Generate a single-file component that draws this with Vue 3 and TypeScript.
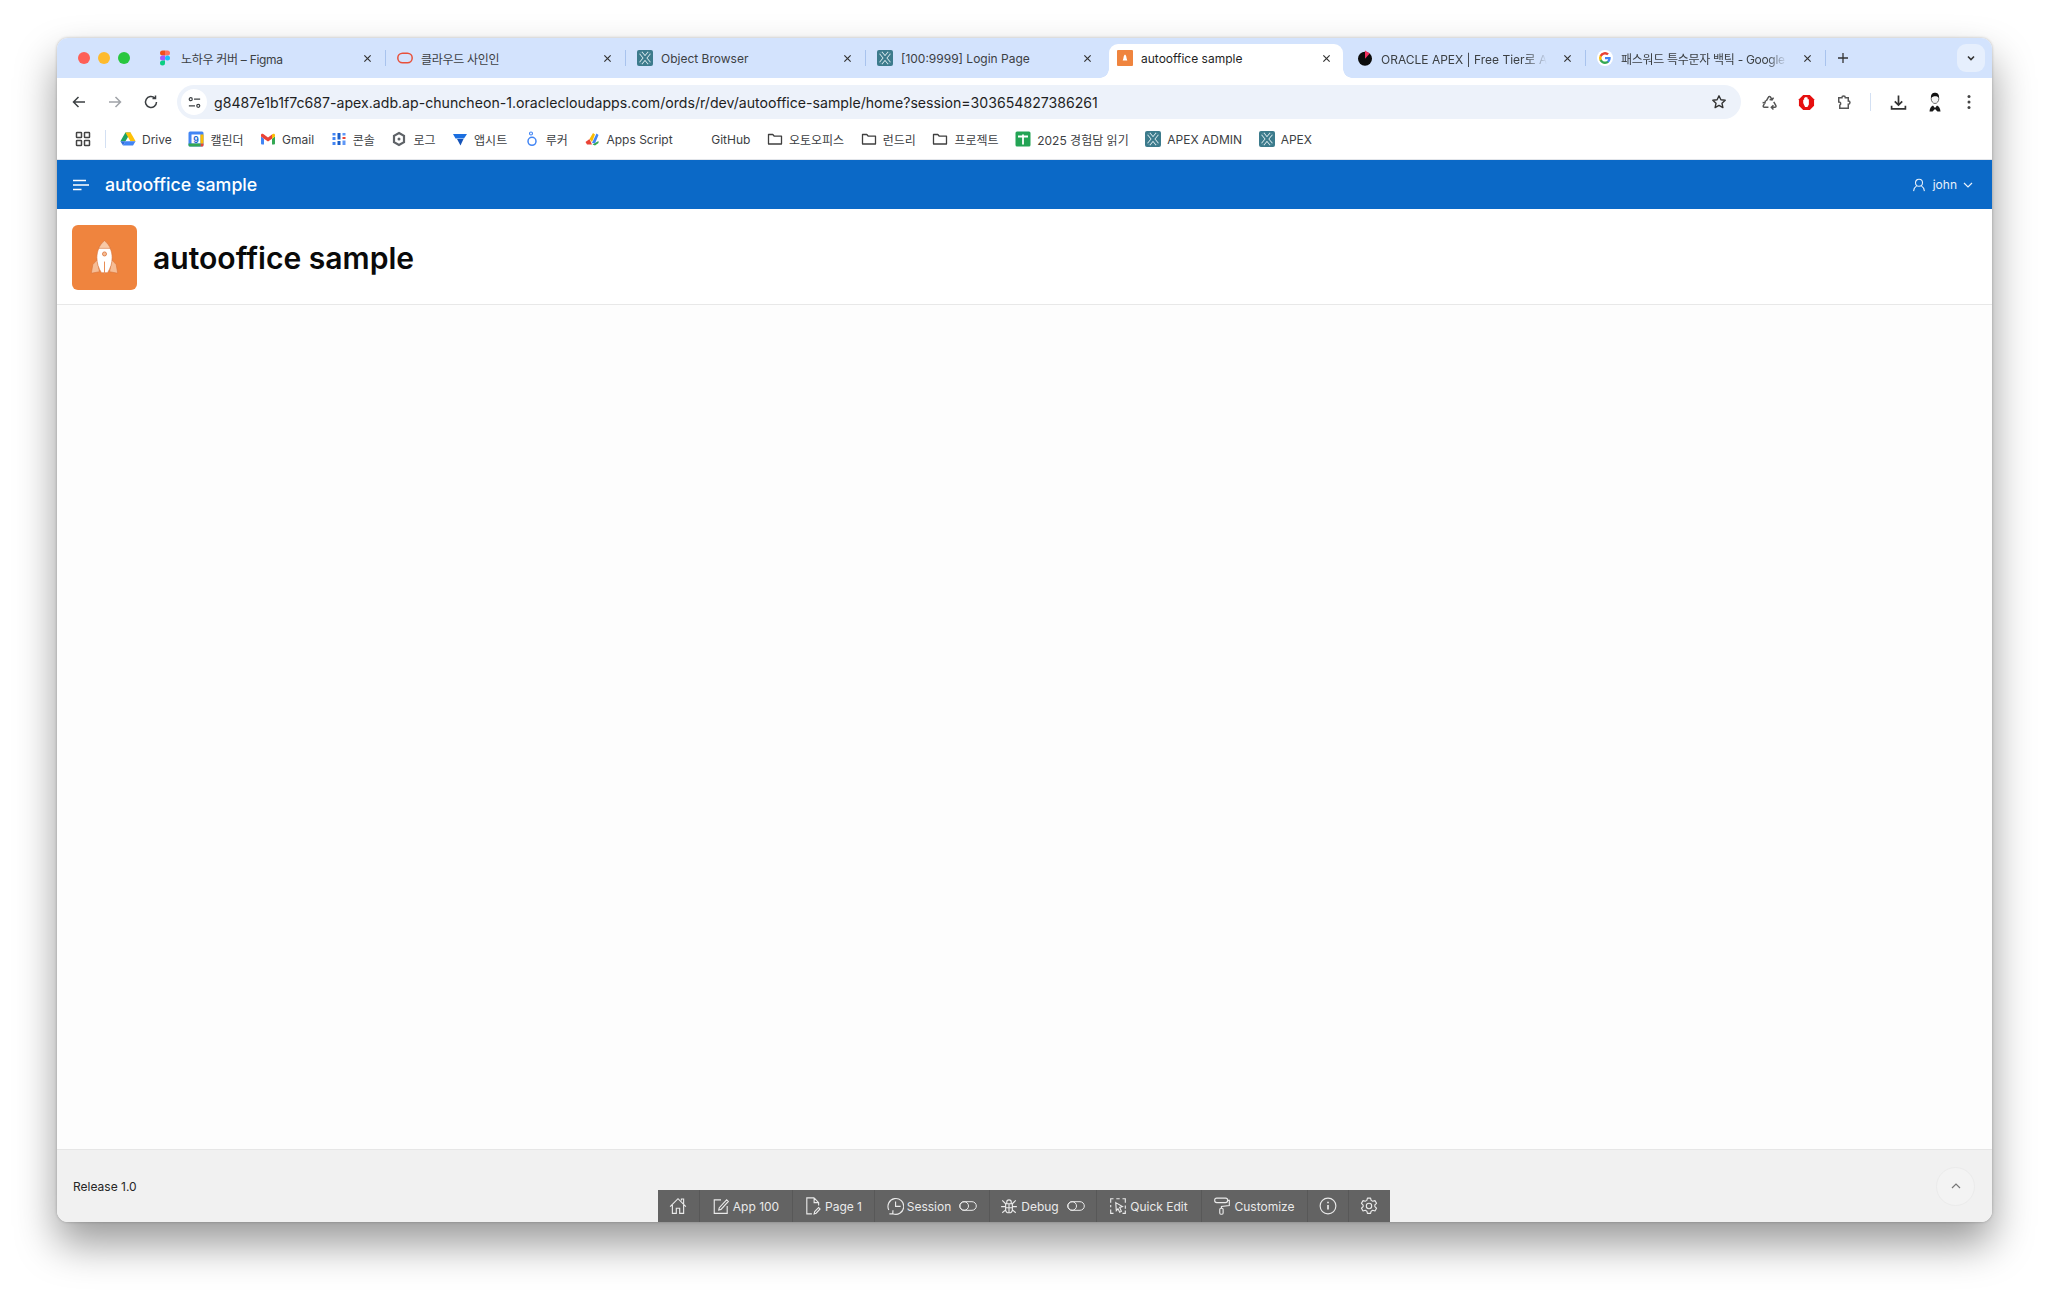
<template>
  <div class="desktop">
    <div class="window">
      <div class="tabstrip">
        <div class="traffic">
          <span class="dot red"></span>
          <span class="dot yellow"></span>
          <span class="dot green"></span>
        </div>
        <div
          v-for="t in tabs"
          :key="t.title"
          class="tab"
          :class="{ active: t.active, nosep: t.nosep }"
        >
          <svg class="fav" viewBox="0 0 16 16" v-html="icons[t.icon]"></svg>
          <span class="tab-title" :class="{ fade: t.fade, tight: t.tight }">{{ t.title }}</span>
          <svg class="tab-x" viewBox="0 0 10 10"><path d="M1.500 1.500l7 7M8.500 1.500l-7 7" /></svg>
        </div>
        <svg class="plus" viewBox="0 0 12 12"><path d="M6 1v10M1 6h10" /></svg>
        <div class="tab-menu">
          <svg viewBox="0 0 10 10"><path d="M2 3.500L5 6.500 8 3.500" /></svg>
        </div>
      </div>

      <div class="toolbar">
        <svg class="tool" viewBox="0 0 16 16"><path d="M14 8H2.500M7.500 3L2.500 8l5 5" /></svg>
        <svg class="tool dim" viewBox="0 0 16 16"><path d="M2 8h11.500M8.500 3l5 5-5 5" /></svg>
        <svg class="tool" viewBox="0 0 16 16"><path d="M13.500 8a5.500 5.500 0 1 1-1.700-4M12.500 1.500V4.500H9.500" /></svg>
        <div class="omnibox">
          <span class="tune">
            <svg viewBox="0 0 16 16"><circle cx="4" cy="4.500" r="1.600" /><circle cx="12" cy="11.500" r="1.600" /><path d="M7.500 4.500H14M2 11.500H8.500" /></svg>
          </span>
          <span class="url">g8487e1b1f7c687-apex.adb.ap-chuncheon-1.oraclecloudapps.com/ords/r/dev/autooffice-sample/home?session=303654827386261</span>
          <svg class="star" viewBox="0 0 16 16"><path d="M8 1.800l1.900 4 4.300.5-3.200 3 .9 4.300L8 11.400l-3.900 2.200.9-4.300-3.200-3 4.300-.5z" /></svg>
        </div>
        <div class="extensions">
          <svg class="ext" viewBox="0 0 16 16"><path d="M5 6.500L7 3c.4-.8 1.500-.8 2 0l1.200 2M11.800 3.400l-1.400 2.200-2.300-.5M12 7.500l2 3.500c.4.8-.1 1.500-1 1.500h-2.500M11.700 14.600l-2-2.100 2-2M7 12.500H3.200c-.9 0-1.400-.7-1-1.500l1.300-2.500M1.500 8l2.100.5.700-2.300" /></svg>
          <svg class="ext stop" viewBox="0 0 18 18"><path class="stop-bg" d="M5.500 1h7L17 5.500v7L12.500 17h-7L1 12.500v-7z" /><path class="stop-hand" d="M5.500 9.500V6h1V4h1.200V3.300H9V3.800h1.200V5.500h1.300V11l-1.500 2.700H7.500z" /></svg>
          <svg class="ext" viewBox="0 0 16 16"><path d="M3.500 3.500h3a1.600 1.600 0 0 1 3.200 0h2.800v3a1.600 1.600 0 0 1 0 3.200v3.800H4.500v-3a1.600 1.600 0 0 0-1-3z" /></svg>
          <span class="tool-sep"></span>
          <svg class="ext dl" viewBox="0 0 16 16"><path d="M8 1.500v9M4.500 7L8 10.500 11.500 7M1.500 11v3h13v-3" /></svg>
          <svg class="avatar" viewBox="0 0 14 20">
            <ellipse cx="7" cy="6.500" rx="3.800" ry="5" fill="#f5f5f5" stroke="#333" stroke-width=".7" />
            <path d="M3 6C2.600 2 5 .8 7 .8S11.400 2 11 6C9.800 3.800 5 3.800 3 6z" fill="#111" />
            <path d="M1.500 19.500c.2-3.200 1.700-5.300 3.500-6l2 2.500 2-2.500c1.800.7 3.300 2.800 3.500 6H9.500L7 17l-2.500 2.500z" fill="#1a1a1a" />
          </svg>
          <svg class="kebab" viewBox="0 0 4 16"><circle cx="2" cy="2.500" r="1.500" /><circle cx="2" cy="8" r="1.500" /><circle cx="2" cy="13.500" r="1.500" /></svg>
        </div>
      </div>

      <div class="bookmarks">
        <svg class="apps" viewBox="0 0 16 16"><rect x="1.500" y="1.500" width="5" height="5" rx=".6" /><rect x="9.500" y="1.500" width="5" height="5" rx=".6" /><rect x="1.500" y="9.500" width="5" height="5" rx=".6" /><rect x="9.500" y="9.500" width="5" height="5" rx=".6" /></svg>
        <span class="bm-sep"></span>
        <div class="bm-list">
          <div v-for="b in bookmarks" :key="b.label" class="bm">
            <svg class="fav" viewBox="0 0 16 16" v-html="icons[b.icon]"></svg>
            <span>{{ b.label }}</span>
          </div>
        </div>
      </div>

      <header class="app-header">
        <svg class="burger" viewBox="0 0 16 12"><path d="M0 1.500h13M0 6h16M0 10.500h8.500" /></svg>
        <span class="app-name">autooffice sample</span>
        <div class="user">
          <svg class="user-ico" viewBox="0 0 16 16"><circle cx="8" cy="5.500" r="4" /><path d="M1.800 15c.3-3 1.700-5 3.500-6M14.200 15c-.3-3-1.700-5-3.500-6" /></svg>
          <span>john</span>
          <svg class="user-chev" viewBox="0 0 10 6"><path d="M1 1l4 4 4-4" /></svg>
        </div>
      </header>

      <section class="hero">
        <div class="hero-icon">
          <svg viewBox="0 0 64 64">
            <path class="fin" d="M25 34l-4.500 5-1.500 8.500 8-1.500zM39 34l4.500 5 1.500 8.500-8-1.500z" />
            <path class="body" d="M32 15.500c5 4 7.500 10.500 7.500 16.500 0 5.500-1.500 10.500-4.500 15h-6c-3-4.500-4.500-9.500-4.500-15 0-6 2.500-12.500 7.500-16.500z" />
            <path class="nose" d="M32 15.500c2.600 2.100 4.500 4.700 5.700 7.500H26.300c1.200-2.800 3.100-5.400 5.700-7.500z" />
            <circle class="port" cx="32" cy="28.500" r="2" />
            <path class="fin-line" d="M32 36v12.500" />
          </svg>
        </div>
        <h1 class="hero-title">autooffice sample</h1>
      </section>

      <main class="content"></main>

      <footer class="footer">
        <span class="release">Release 1.0</span>
        <button class="to-top">
          <svg viewBox="0 0 10 6"><path d="M1 5l4-4 4 4" /></svg>
        </button>

        <div class="dev-bar">
          <div v-for="d in devItems" :key="d.key" class="dev-item" :style="{ width: d.width + 'px' }">
            <svg class="dev-ico" viewBox="0 0 16 16" v-html="devIcons[d.key]"></svg>
            <span v-if="d.label">{{ d.label }}</span>
            <svg v-if="d.toggle" class="dev-toggle" viewBox="0 0 18 10"><rect x=".7" y=".7" width="16.600" height="8.600" rx="4.300" /><circle cx="5.200" cy="5" r="4.300" /></svg>
          </div>
        </div>
      </footer>
    </div>
  </div>
</template>

<script setup lang="ts">
interface Tab {
  title: string
  icon: string
  active?: boolean
  fade?: boolean
  nosep?: boolean
  tight?: boolean
}

const apexLines = 'M3.700 2.700l8.600 10.600M12.300 2.700L3.700 13.300'
const apexMark = `<rect width="16" height="16" rx="2" fill="#3c7b8c"/><path d="${apexLines}" stroke="#e3f0f3" stroke-width="3.800" fill="none"/><path d="${apexLines}" stroke="#3c7b8c" stroke-width="2.200" fill="none"/>`

const folder = `<path d="M1.500 3.500h4.300l1.500 1.700h7.200v7.800h-13z" fill="none" stroke="#3f3f3f" stroke-width="1.300" stroke-linejoin="round"/>`

const icons: Record<string, string> = {
  figma: `<path d="M5.500 .5H8v5H5.500a2.500 2.500 0 0 1 0-5z" fill="#f24e1e"/><path d="M8 .5h2.500a2.500 2.500 0 0 1 0 5H8z" fill="#ff7262"/><path d="M5.500 5.500H8v5H5.500a2.500 2.500 0 0 1 0-5z" fill="#a259ff"/><circle cx="10.500" cy="8" r="2.500" fill="#1abcfe"/><path d="M5.500 15.500a2.500 2.500 0 0 1 0-5H8v2.500a2.500 2.500 0 0 1-2.500 2.500z" fill="#0acf83"/>`,
  oracle: `<rect x=".8" y="3.200" width="14.400" height="9.600" rx="4.800" fill="none" stroke="#e8503a" stroke-width="1.500"/>`,
  apex: apexMark,
  auto: `<rect width="16" height="16" rx="1" fill="#ef843e"/><path d="M8 4.500c1.200 1 1.500 2.500 1.500 3.500l.8 2.500H5.700L6.500 8c0-1 .3-2.500 1.500-3.500z" fill="#fff"/>`,
  pie: `<circle cx="8" cy="8.800" r="7" fill="#0c0c0c"/><path d="M8 8.800V.5l4.800 3.100z" fill="#f2305f"/>`,
  google: `<circle cx="8" cy="8" r="8" fill="#fff"/><path d="M13.700 8.100c0-.4 0-.8-.1-1.200H8v2.300h3.200c-.1.800-.6 1.400-1.200 1.800v1.500h1.900c1.100-1 1.800-2.500 1.800-4.400z" fill="#4285f4"/><path d="M8 13.900c1.600 0 2.900-.5 3.900-1.400L10 11c-.5.400-1.200.6-2 .6-1.500 0-2.800-1-3.300-2.400h-2v1.500c1 2 3 3.200 5.300 3.200z" fill="#34a853"/><path d="M4.700 9.200c-.3-.8-.3-1.600 0-2.400V5.300h-2a5.900 5.900 0 0 0 0 5.400z" fill="#fbbc05"/><path d="M8 4.400c.9 0 1.600.3 2.200.9L11.900 3.600A5.900 5.900 0 0 0 2.700 5.300l2 1.500C5.200 5.400 6.500 4.400 8 4.400z" fill="#ea4335"/>`,
  drive: `<path d="M5.400 1.500h5.200L5.500 10.300H.4z" fill="#1ea362"/><path d="M5.400 1.500h5.200l5 8.800h-5.200z" fill="#ffc107"/><path d="M3 14.500l2.500-4.200h10.100L13 14.500z" fill="#4285f4"/><path d="M.4 10.300h5.100L3 14.500z" fill="#2f6fdc"/>`,
  calendar: `<rect x=".5" y=".5" width="15" height="15" rx="1.500" fill="#4285f4"/><rect x="3.500" y="3.500" width="9" height="9" fill="#fff"/><path d="M12.500 12.500h3V14a1.500 1.500 0 0 1-1.500 1.500h-1.500z" fill="#ea4335"/><path d="M.5 12.500h12v3H2A1.500 1.500 0 0 1 .5 14z" fill="#34a853"/><path d="M12.500 3.500h3v9h-3z" fill="#fbbc04"/><text x="8" y="11.500" text-anchor="middle" font-size="8.500" font-weight="700" font-family="Inter, sans-serif" fill="#1967d2">9</text>`,
  gmail: `<path d="M1 5.500L4 7.800V13.500H2A1 1 0 0 1 1 12.500z" fill="#4285f4"/><path d="M15 5.500L12 7.800V13.500H14A1 1 0 0 0 15 12.500z" fill="#34a853"/><path d="M1 4C1 2.700 2.500 2.300 3.300 3L8 6.500 12 3.500v4.300L8 10.500 4 7.800 1 5.500z" fill="#ea4335"/><path d="M12 3.500L12.700 3C13.500 2.300 15 2.700 15 4V5.500L12 7.800z" fill="#fbbc04"/>`,
  console: `<path d="M1.500 2h3v2.500h-3zM1.500 6h3v3h-3zM1.500 11h3v3h-3z" fill="#4285f4"/><path d="M6.500 2h3v6.500h-3zM6.500 10h3v4h-3z" fill="#1a5fc8"/><path d="M11.500 2h3v2.500h-3zM11.500 9.500h3v4.500h-3z" fill="#5e97f6"/><path d="M11.500 6h3v2h-3z" fill="#ea4335"/>`,
  log: `<path d="M8 2l5 2.900v6.200L8 14l-5-2.900V4.900z" fill="none" stroke="#5f6368" stroke-width="2.200"/><circle cx="8" cy="8" r="1.500" fill="#5f6368"/>`,
  sheetapp: `<path d="M1 3h14l-3 4.500H3.500z" fill="#1a6ee0"/><path d="M5 8h6.500L8.500 14.500z" fill="#1553b8"/>`,
  looker: `<circle cx="8" cy="10.300" r="4" fill="none" stroke="#4285f4" stroke-width="1.500"/><circle cx="7" cy="2.500" r="1.500" fill="none" stroke="#4285f4" stroke-width="1.100"/>`,
  script: `<path d="M1.500 11l4-3 2.500 5.500H3z" fill="#ea4335"/><path d="M5.500 8l3.500-6 2 1.500-3 7.500z" fill="#fbbc04"/><path d="M8 12l4.500-9.500L14.500 4l-3.500 8.500z" fill="#4285f4"/><path d="M8.500 13.500l6-3.500v2l-3.500 2.500z" fill="#34a853"/>`,
  blank: ``,
  folder,
  gsheet: `<rect x=".5" y=".5" width="15" height="15" rx="1.500" fill="#23a455"/><path d="M3 5.500h10M8 3.500v10" stroke="#fff" stroke-width="1.800" fill="none"/>`
}

const tabs: Tab[] = [
  { title: '노하우 커버 – Figma', icon: 'figma', tight: true },
  { title: '클라우드 사인인', icon: 'oracle', tight: true },
  { title: 'Object Browser', icon: 'apex' },
  { title: '[100:9999] Login Page', icon: 'apex', nosep: true },
  { title: 'autooffice sample', icon: 'auto', active: true, nosep: true },
  { title: 'ORACLE APEX | Free Tier로 AI', icon: 'pie', fade: true },
  { title: '패스워드 특수문자 백틱 - Google', icon: 'google', fade: true, tight: true }
]

const bookmarks = [
  { label: 'Drive', icon: 'drive' },
  { label: '캘린더', icon: 'calendar' },
  { label: 'Gmail', icon: 'gmail' },
  { label: '콘솔', icon: 'console' },
  { label: '로그', icon: 'log' },
  { label: '앱시트', icon: 'sheetapp' },
  { label: '루커', icon: 'looker' },
  { label: 'Apps Script', icon: 'script' },
  { label: 'GitHub', icon: 'blank' },
  { label: '오토오피스', icon: 'folder' },
  { label: '런드리', icon: 'folder' },
  { label: '프로젝트', icon: 'folder' },
  { label: '2025 경험담 읽기', icon: 'gsheet' },
  { label: 'APEX ADMIN', icon: 'apex' },
  { label: 'APEX', icon: 'apex' }
]

const devItems = [
  { key: 'home', label: '', width: 42 },
  { key: 'app', label: 'App 100', width: 93 },
  { key: 'page', label: 'Page 1', width: 82 },
  { key: 'session', label: 'Session', width: 115, toggle: true },
  { key: 'debug', label: 'Debug', width: 107, toggle: true },
  { key: 'quick', label: 'Quick Edit', width: 105 },
  { key: 'custom', label: 'Customize', width: 106 },
  { key: 'info', label: '', width: 41 },
  { key: 'gear', label: '', width: 41 }
]

const devIcons: Record<string, string> = {
  home: `<path d="M1 8.500L8 1.500l7 7M3 7v7.500h3.500V10h3v4.500H13V7M11 3V1.800h2V6"/>`,
  app: `<path d="M8 2.500H2V14.500H13.500V8M6.500 9.500L6 11.500l2-.5 6.500-7-1.500-1.500z"/>`,
  page: `<path d="M9 .8H2.500V15H7M9 .8L13 5V7.500M9 .8V5H13M9 15l.5-2 3.500-3.700 1.300 1.300-3.500 3.800z"/>`,
  session: `<path d="M2.500 11.500A7 7 0 1 1 6 14.800M8.500 4v4.300H13M3 15l3-.2.200-3"/>`,
  debug: `<path d="M5 6h6v5a3 3 0 0 1-6 0zM6 6V4.500a2 2 0 0 1 4 0V6M5 8.500H1M15 8.500H11M5 11.500l-3 2.500M11 11.500l3 2.500M5 6L2 3M11 6l3-3M8 6v8M5 9.500h6"/>`,
  quick: `<path d="M4 1.500H1.500V5M6.500 1.500h3M12 1.500h2.500V5M14.500 7.500v3M14.500 12v2.500H12M4 14.500H1.500V11M1.500 9V7M6 5l6 3.500-2.500.8L11 12.700l-1.500.8-1.500-3-1.500 1.700z"/>`,
  custom: `<rect x="1.500" y="1" width="11.500" height="4" rx="1.800"/><path d="M13 3h1.500v4.500L7.500 8.500V10"/><rect x="6" y="10" width="3" height="5.300" rx="1"/>`,
  info: `<circle cx="8" cy="8" r="7"/><path d="M8 7.200v4" stroke-width="1.500"/><path d="M8 4.200v1.300" stroke-width="1.500"/>`,
  gear: `<path d="M6.600 1h2.800l.5 2 1.400.8 2-.6 1.400 2.400-1.500 1.400v1.600l1.500 1.400-1.400 2.400-2-.6-1.400.8-.5 2H6.600l-.5-2-1.400-.8-2 .6-1.400-2.400 1.500-1.400V7.200L1.300 5.600l1.400-2.400 2 .6 1.400-.8z" stroke-linejoin="round"/><circle cx="8" cy="8" r="2.400"/>`
}
</script>

<style>
html,
body {
  margin: 0;
  background: #fff;
}
</style>

<style scoped>
.desktop {
  box-sizing: border-box;
  width: 2048px;
  height: 1297px;
  padding: 38px 56px 75px 57px;
  background: #fff;
  font-family: Inter, "Noto Sans CJK KR", sans-serif;
  overflow: hidden;
}

.window {
  height: 100%;
  display: flex;
  flex-direction: column;
  border-radius: 11px;
  overflow: hidden;
  background: #fff;
  box-shadow: 0 22px 42px rgba(0, 0, 0, 0.4), 0 0 3px rgba(0, 0, 0, 0.25);
}

/* tab strip */
.tabstrip {
  height: 40px;
  flex: none;
  display: flex;
  align-items: flex-end;
  background: #d3e3fd;
  box-sizing: border-box;
  position: relative;
}

.traffic {
  width: 89px;
  height: 34px;
  display: flex;
  align-items: center;
  gap: 8px;
  padding: 0 0 6px 21px;
  box-sizing: border-box;
  flex: none;
}

.dot {
  width: 12px;
  height: 12px;
  border-radius: 50%;
}
.red { background: #fe5f57; }
.yellow { background: #febb2e; }
.green { background: #28c73f; }

.tab {
  width: 240px;
  height: 34px;
  flex: none;
  box-sizing: border-box;
  display: flex;
  align-items: center;
  padding: 0 14px 6px 11px;
  gap: 8px;
  font-size: 12px;
  color: #3c4043;
  position: relative;
}

.tab::after {
  content: "";
  position: absolute;
  right: 0;
  top: 6px;
  height: 16px;
  width: 1px;
  background: #a8c3ee;
}
.tab.nosep::after {
  display: none;
}

.tab.active {
  background: #fff;
  color: #1f1f1f;
  border-radius: 9px 9px 0 0;
  margin: 0 3px;
  width: 234px;
  padding: 0 12px 6px 8px;
}

.tab.active::before {
  content: "";
  position: absolute;
  left: -9px;
  bottom: 0;
  width: 9px;
  height: 9px;
  background: radial-gradient(circle at 0 0, #d3e3fd 8.5px, #fff 9px);
}

.tab.active::after {
  display: block;
  right: -9px;
  top: auto;
  bottom: 0;
  width: 9px;
  height: 9px;
  background: radial-gradient(circle at 100% 0, #d3e3fd 8.5px, #fff 9px);
}

.fav {
  width: 16px;
  height: 16px;
  flex: none;
}

.tab-title {
  flex: 1;
  min-width: 0;
  white-space: nowrap;
  overflow: hidden;
}

.tab-title.tight {
  letter-spacing: -0.3px;
}

.tab-title.fade {
  -webkit-mask-image: linear-gradient(to right, #000 88%, transparent 100%);
  mask-image: linear-gradient(to right, #000 88%, transparent 100%);
}

.tab-x {
  width: 9px;
  height: 9px;
  flex: none;
  margin-left: 8px;
}
.tab-x path,
.plus path,
.tab-menu path {
  fill: none;
  stroke: #333;
  stroke-width: 1.300;
}

.plus {
  width: 12px;
  height: 12px;
  margin: 0 0 14px 11px;
  flex: none;
}

.tab-menu {
  position: absolute;
  right: 7px;
  top: 6px;
  width: 28px;
  height: 28px;
  border-radius: 9px;
  background: #e6effd;
  display: flex;
  align-items: center;
  justify-content: center;
}
.tab-menu svg {
  width: 10px;
  height: 10px;
}
.tab-menu path {
  stroke-width: 1.600;
}

/* address bar row */
.toolbar {
  height: 48px;
  flex: none;
  display: flex;
  align-items: center;
  padding: 0 16px 0 14px;
  box-sizing: border-box;
  background: #fff;
  gap: 20px;
}

.tool {
  width: 16px;
  height: 16px;
  flex: none;
  fill: none;
  stroke: #3c4043;
  stroke-width: 1.500;
}
.tool.dim {
  stroke: #a0a3a8;
}

.omnibox {
  flex: none;
  width: 1564px;
  height: 34px;
  margin-left: -2px;
  border-radius: 17px;
  background: #edf2fa;
  display: flex;
  align-items: center;
  padding: 0 14px 0 4px;
  box-sizing: border-box;
}

.tune {
  width: 26px;
  height: 26px;
  border-radius: 50%;
  background: #fff;
  display: flex;
  align-items: center;
  justify-content: center;
  flex: none;
}
.tune svg {
  width: 15px;
  height: 15px;
  fill: none;
  stroke: #3c4043;
  stroke-width: 1.300;
}

.url {
  flex: 1;
  margin-left: 7px;
  font-size: 14.140px;
  color: #1f1f1f;
  white-space: nowrap;
}

.star {
  width: 16px;
  height: 16px;
  fill: none;
  stroke: #333;
  stroke-width: 1.400;
  stroke-linejoin: round;
}

.extensions {
  display: flex;
  align-items: center;
  margin-left: 0;
  gap: 20px;
}

.ext {
  width: 17px;
  height: 17px;
  flex: none;
  fill: none;
  stroke: #555;
  stroke-width: 1.400;
}
.ext.dl {
  stroke: #333;
  stroke-width: 1.600;
}
.ext.stop .stop-bg {
  fill: #e60f0f;
  stroke: none;
}
.ext.stop .stop-hand {
  fill: #fff;
  stroke: none;
}

.tool-sep {
  width: 1px;
  height: 18px;
  background: #d3e0f3;
  margin: 0 -1px 0 -2px;
}

.avatar {
  width: 14px;
  height: 20px;
  flex: none;
  margin-left: 1px;
}

.kebab {
  width: 4px;
  height: 16px;
  fill: #444;
  margin-left: 5px;
}

/* bookmarks */
.bookmarks {
  height: 34px;
  flex: none;
  display: flex;
  align-items: flex-start;
  padding: 5px 0 0 18px;
  box-sizing: border-box;
  background: #fff;
  font-size: 12px;
  color: #3c4043;
  border-bottom: 1px solid #e2e5ea;
}

.apps {
  width: 16px;
  height: 16px;
  flex: none;
  fill: none;
  stroke: #444;
  stroke-width: 1.500;
}

.bm-sep {
  width: 1px;
  height: 18px;
  background: #d3e0f3;
  margin: -1px 14px 0 14px;
}

.bm-list {
  display: flex;
  gap: 16.600px;
}

.bm {
  display: flex;
  align-items: center;
  gap: 6px;
  height: 16px;
  white-space: nowrap;
}

/* apex app */
.app-header {
  height: 49px;
  flex: none;
  background: #0b69c7;
  color: #fff;
  display: flex;
  align-items: center;
  padding: 0 19px 0 16px;
  box-sizing: border-box;
}

.burger {
  width: 16px;
  height: 12px;
  fill: none;
  stroke: #fff;
  stroke-width: 1.500;
  flex: none;
}

.app-name {
  margin-left: 16px;
  font-size: 17.800px;
  font-weight: 500;
}

.user {
  margin-left: auto;
  display: flex;
  align-items: center;
  font-size: 12px;
  color: #e9f1fb;
}

.user-ico {
  width: 14px;
  height: 14px;
  margin-right: 7px;
  fill: none;
  stroke: #e9f1fb;
  stroke-width: 1.200;
}

.user-chev {
  width: 10px;
  height: 6px;
  margin-left: 6px;
  fill: none;
  stroke: #e9f1fb;
  stroke-width: 1.200;
}

.hero {
  height: 96px;
  flex: none;
  display: flex;
  align-items: center;
  padding: 1px 0 0 15px;
  gap: 16px;
  box-sizing: border-box;
  background: #fff;
  border-bottom: 1px solid #e8e8e8;
}

.hero-icon {
  width: 65px;
  height: 65px;
  border-radius: 6px;
  background: #ef843e;
  flex: none;
}
.hero-icon svg {
  width: 65px;
  height: 65px;
  display: block;
}
.hero-icon .body {
  fill: #fff;
  stroke: #d9733a;
  stroke-width: .6;
}
.hero-icon .nose {
  fill: #f8c9a6;
  stroke: #d9733a;
  stroke-width: .6;
}
.hero-icon .fin {
  fill: #f6bd95;
  stroke: #d9733a;
  stroke-width: .6;
}
.hero-icon .port {
  fill: #f6bd95;
  stroke: #d9733a;
  stroke-width: .8;
}
.hero-icon .fin-line {
  stroke: #e88d55;
  stroke-width: 1;
}

.hero-title {
  margin: 2px 0 0;
  font-size: 30.100px;
  font-weight: 600;
  color: #0a0a0a;
}

.content {
  flex: 1;
  background: #fdfdfd;
}

.footer {
  height: 73px;
  flex: none;
  position: relative;
  background: #f1f1f1;
  border-top: 1px solid #e6e6e6;
  box-sizing: border-box;
  display: flex;
  align-items: center;
  justify-content: space-between;
  padding: 0 17px 0 16px;
}

.release {
  font-size: 12px;
  color: #262626;
}

.to-top {
  width: 39px;
  height: 39px;
  padding: 0;
  border-radius: 50%;
  background: #f3f3f3;
  border: 1px solid #ebebeb;
  display: flex;
  align-items: center;
  justify-content: center;
}
.to-top svg {
  width: 10px;
  height: 6px;
  fill: none;
  stroke: #777;
  stroke-width: 1.200;
}

.dev-bar {
  position: absolute;
  left: 600.500px;
  bottom: 0;
  height: 32px;
  display: flex;
  background: #636363;
  color: #eaeaea;
  font-size: 12px;
}

.dev-item {
  flex: none;
  display: flex;
  align-items: center;
  justify-content: center;
  gap: 3px;
  box-sizing: border-box;
  border-right: 1px solid #585858;
  white-space: nowrap;
}
.dev-item:last-child {
  border-right: 0;
}

.dev-ico {
  width: 18px;
  height: 18px;
  flex: none;
  fill: none;
  stroke: #eaeaea;
  stroke-width: 1;
}

.dev-toggle {
  width: 18px;
  height: 10px;
  margin-left: 5px;
  fill: none;
  stroke: #eaeaea;
  stroke-width: 1;
}
</style>
